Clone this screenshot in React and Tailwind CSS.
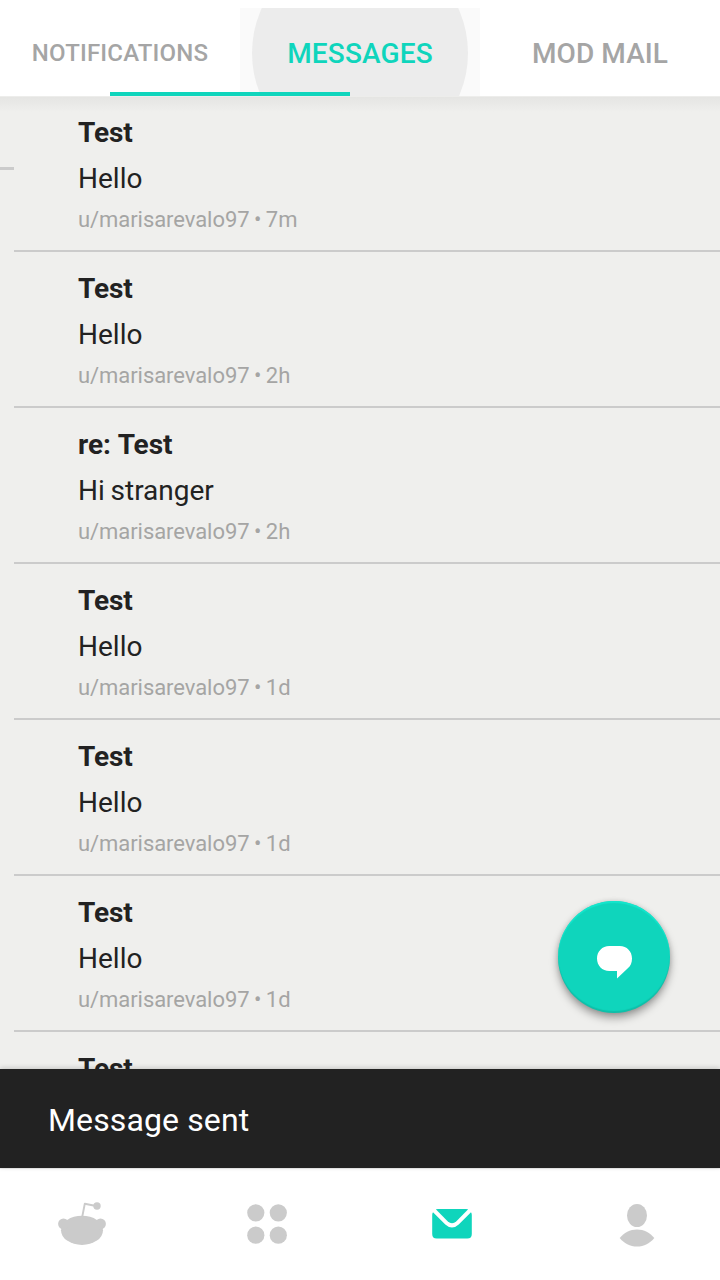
import React from "react";

const messages = [
  { title: "Test", body: "Hello", meta: "u/marisarevalo97 • 7m" },
  { title: "Test", body: "Hello", meta: "u/marisarevalo97 • 2h" },
  { title: "re: Test", body: "Hi stranger", meta: "u/marisarevalo97 • 2h" },
  { title: "Test", body: "Hello", meta: "u/marisarevalo97 • 1d" },
  { title: "Test", body: "Hello", meta: "u/marisarevalo97 • 1d" },
  { title: "Test", body: "Hello", meta: "u/marisarevalo97 • 1d" },
  { title: "Test" },
];

function TabBar() {
  return (
    <header className="relative z-10 h-24 shrink-0 bg-white pt-2 font-medium text-[#a5a5a5]">
      <nav className="grid h-[88px] grid-cols-3">
        <button className="flex items-center justify-center pt-[2px] text-[24px] leading-[34px] tracking-[0.17px]">
          NOTIFICATIONS
        </button>
        <button className="relative flex items-center justify-center overflow-hidden bg-[#fafafa] text-[28px] leading-[34px] tracking-[0.15px] text-[#0fd5bc]">
          <span className="absolute -top-[63px] left-3 size-[216px] rounded-full bg-[#ececec]" />
          <span className="relative pt-1">MESSAGES</span>
        </button>
        <button className="flex items-center justify-center pt-1 text-[28px] leading-[34px] tracking-[0.1px]">
          MOD MAIL
        </button>
      </nav>
      <span className="absolute bottom-0 left-[110px] h-1 w-60 bg-[#0fd5bc]" />
    </header>
  );
}

function Message({ title, body, meta }) {
  return (
    <li className="flex h-[156px] shrink-0 flex-col border-b-2 border-[#cbcbcb] pt-5 pl-16 text-[#222222]">
      <h2 className="text-[28px] leading-[34px] font-bold tracking-[-0.1px] [word-spacing:0.8px]">{title}</h2>
      {body && <p className="mt-3 text-[28px] leading-[34px] [word-spacing:-1.2px]">{body}</p>}
      {meta && (
        <p className="mt-[11px] text-[22px] leading-[26px] tracking-[-0.06px] [word-spacing:-0.9px] text-[#a5a5a4]">
          {meta}
        </p>
      )}
    </li>
  );
}

function BottomNav() {
  return (
    <nav className="flex h-28 shrink-0 items-start border-t border-[#eeeeee] bg-white pt-4">
      <button className="w-[164px] pl-[42px]">
        <svg className="h-20 w-20" viewBox="42 1185 80 80" fill="#cbcbcb">
          <ellipse cx="82" cy="1230.3" rx="21" ry="14.6" />
          <circle cx="63.5" cy="1223.9" r="5.4" />
          <circle cx="100.5" cy="1223.9" r="5.4" />
          <path d="M82 1218L84.8 1203.7L96 1206" fill="none" stroke="#cbcbcb" strokeWidth="1.9" strokeLinejoin="round" />
          <circle cx="97" cy="1206" r="3.7" />
        </svg>
      </button>
      <button className="w-[206px] pl-[63px]">
        <svg className="h-20 w-20" viewBox="227 1185 80 80" fill="#cbcbcb">
          <circle cx="255.8" cy="1212.8" r="8.6" />
          <circle cx="278.3" cy="1212.8" r="8.6" />
          <circle cx="255.8" cy="1235.2" r="8.6" />
          <circle cx="278.3" cy="1235.2" r="8.6" />
        </svg>
      </button>
      <button className="w-[164px] pl-[42px]">
        <svg className="h-20 w-20" viewBox="412 1185 80 80" fill="#0fd5bc">
          <path d="M435.8 1209.3Q436.5 1209 438 1209H466Q467.5 1209 468.2 1209.3L456.4 1221.2Q452 1225.4 447.6 1221.2Z" />
          <path d="M433 1212.2L445.3 1224.4Q452 1230.6 458.7 1224.4L471 1212.2Q471.8 1213.2 471.8 1215V1234Q471.8 1238.5 467.3 1238.5H436.7Q432.2 1238.5 432.2 1234V1215Q432.2 1213.2 433 1212.2Z" />
        </svg>
      </button>
      <button className="w-[186px] pl-[63px]">
        <svg className="h-20 w-20" viewBox="597 1185 80 80" fill="#cbcbcb">
          <ellipse cx="637" cy="1215.5" rx="10" ry="11.6" />
          <path d="M619.7 1238C624 1232.6 630 1229.4 637 1229.4C644 1229.4 650 1232.6 654.3 1238C650 1243.4 644 1246.6 637 1246.6C630 1246.6 624 1243.4 619.7 1238Z" />
        </svg>
      </button>
    </nav>
  );
}

export default function App() {
  return (
    <div className="relative flex h-[1280px] w-[720px] flex-col overflow-hidden bg-[#efefed] font-['Roboto',sans-serif]">
      <TabBar />
      <main className="relative flex min-h-0 flex-1 overflow-hidden">
        <div className="absolute inset-x-0 top-0 h-4 border-t border-[#ededeb] bg-linear-to-b from-[#e5e5e3] to-[#efefed]" />
        <aside className="relative w-3.5 shrink-0 pt-[71px]">
          <div className="h-[3px] bg-[#cbcbcb]" />
        </aside>
        <ul className="relative flex flex-1 flex-col">
          {messages.map((message, index) => (
            <Message key={index} {...message} />
          ))}
        </ul>
      </main>
      <div className="relative flex h-[99px] shrink-0 items-center bg-[#222222] pt-[3px] pl-12 text-[32px] leading-[38px] tracking-[0.12px] text-white shadow-[0_-1px_5px_rgba(0,0,0,0.18)]">
        Message sent
      </div>
      <BottomNav />
      <button className="absolute top-[901px] left-[558px] size-28 rounded-full bg-[#0fd5bc] shadow-[0_5px_9px_rgba(0,0,0,0.35),0_0_5px_rgba(0,0,0,0.12),inset_0_-2px_1px_rgba(0,0,0,0.1),inset_0_2px_1px_rgba(20,232,206,0.9)]">
        <svg className="size-28" viewBox="558 901 112 112" fill="white">
          <path d="M609.3 946H619.7C627 946 632 951.5 632 958.5C632 963 630.5 966 627.8 968.2L617 978.5V971H609.3C602.2 971 597 965.5 597 958.5C597 951.5 602.2 946 609.3 946Z" />
        </svg>
      </button>
    </div>
  );
}
